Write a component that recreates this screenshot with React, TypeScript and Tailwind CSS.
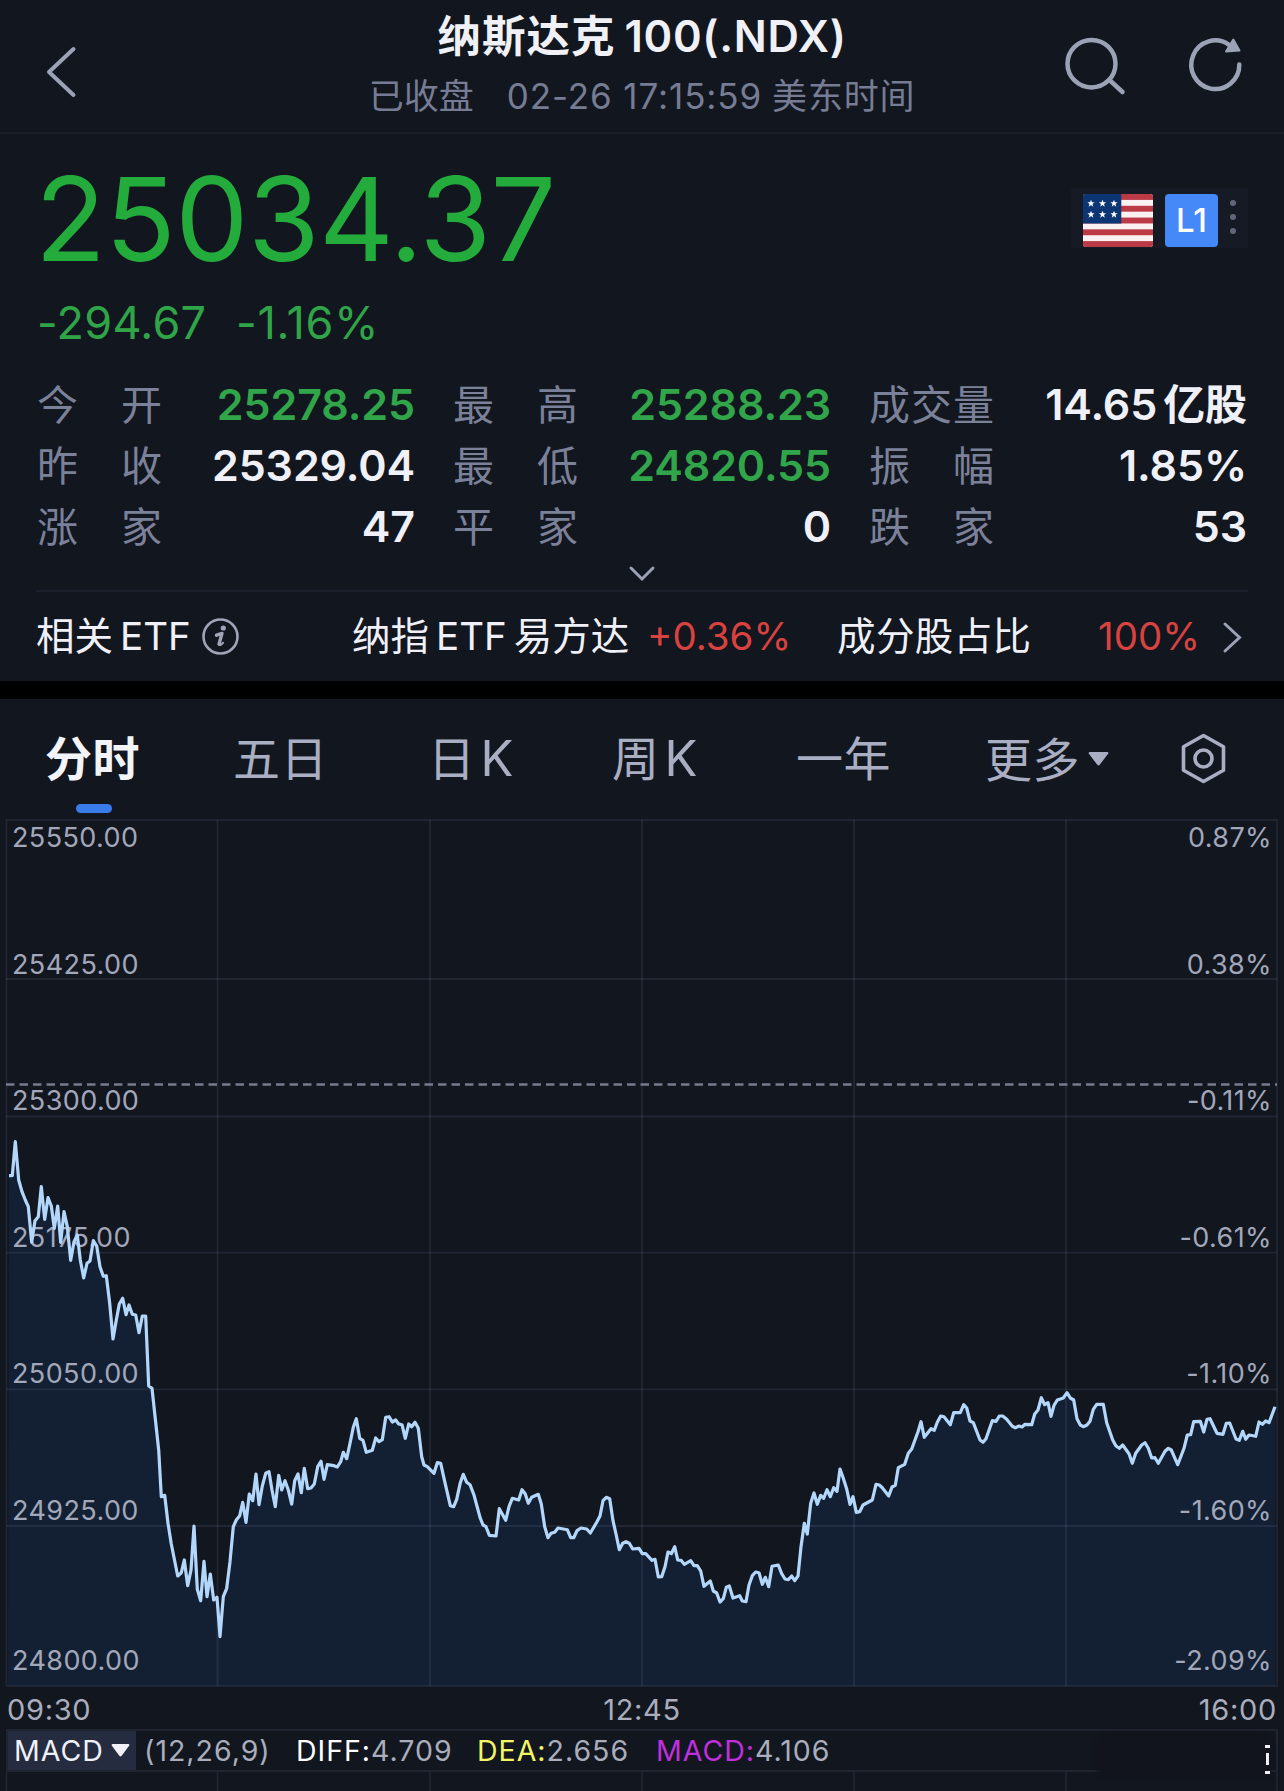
import clsx from "clsx";

const STATS = [
  { label: "今开", value: "25278.25", down: true },
  { label: "最高", value: "25288.23", down: true },
  { label: "成交量", value: "14.65", unit: "亿股" },
  { label: "昨收", value: "25329.04" },
  { label: "最低", value: "24820.55", down: true },
  { label: "振幅", value: "1.85%" },
  { label: "涨家", value: "47" },
  { label: "平家", value: "0" },
  { label: "跌家", value: "53" },
];

const TABS = [
  { name: "分时", active: true },
  { name: "五日" },
  { name: "日", suffix: "K" },
  { name: "周", suffix: "K" },
  { name: "一年" },
];

const AXIS = [
  { price: "25550.00", pct: "0.87%", top: "top-[4px]" },
  { price: "25425.00", pct: "0.38%", top: "top-[131px]" },
  { price: "25300.00", pct: "-0.11%", top: "top-[267px]" },
  { price: "25175.00", pct: "-0.61%", top: "top-[404px]" },
  { price: "25050.00", pct: "-1.10%", top: "top-[540px]" },
  { price: "24925.00", pct: "-1.60%", top: "top-[677px]" },
  { price: "24800.00", pct: "-2.09%", top: "top-[827px]" },
];

const GRID_X = [217.5, 430, 642, 854, 1066];
const GRID_Y = [979, 1116.5, 1252.7, 1389.3, 1526];

// minute by minute line, x then y
const LINE = `9,1175.7 12.3,1175.7 15.3,1141.7 18.7,1180 22,1191.7 25.3,1200 28.3,1206.7 31.7,1242.3 35,1220.7 38.3,1216.7
41.3,1186.7 44.7,1219.3 48,1197.7 51.3,1206 54.3,1228.3 57.7,1206 60.7,1242.3 64,1211.7 67.3,1226.7 70.7,1260.3
74,1241.7 77.3,1235 80.3,1260 83.7,1278 87,1263.3 90,1261 93.3,1240.7 96.7,1246 100,1266.7 103.3,1276.3
106.3,1275.7 109.7,1303.3 113,1339 116.3,1320 119.3,1304 122.7,1298.3 126,1314.7 129,1305 132.3,1314.3 135.7,1315
139,1332.7 142.3,1316 145.7,1316 148.7,1386 152,1388.3 158.7,1450 161.3,1496.7 164.7,1495.3 168,1523.3 171.3,1544
177.7,1576 181.3,1572.7 184.3,1560 187.7,1585.7 191,1570 194,1526 197.3,1589.3 200.7,1600.7 204,1561.3 207,1596.7
210.3,1574 213.7,1600 217,1597.3 220,1636.7 223.3,1596.7 226.7,1588.3 230,1561.7 233.3,1526.7 236.3,1520 239.7,1515.7
242.7,1502.3 246,1522.3 249.3,1494 252.7,1500.7 256,1474 259,1504.7 262.3,1486 265.7,1473.3 269,1471.7 272,1490
275.3,1506.7 278.7,1475.3 281.7,1490 285,1480.7 288.3,1490 291.7,1504 294.7,1480.7 298,1474 301.3,1492.7 304.3,1468.3
307.7,1488.7 311,1488 314.3,1484 317.7,1466.7 321,1461.3 324,1479.3 327.3,1464.7 334,1465.7 337.3,1467 340.7,1461.7
343.3,1452.3 346.7,1458.7 350,1443.3 353.3,1427.3 356.3,1418.7 359.7,1438.3 363,1440.3 366.3,1452.3 372.3,1450.3
375.7,1438 379,1441.7 382.3,1439.7 385.7,1417.3 389,1416.7 392.3,1422 395.7,1420 398.7,1424 402,1424.7 405.3,1438.3
408.7,1424 411.7,1426.7 415,1422.3 418.3,1428.3 421.7,1456.7 424,1465 427.3,1466.7 434,1473.3 437.3,1462.7 440.7,1463.3
444,1478.3 450.3,1505.7 453.7,1506.7 456.7,1499.3 460.3,1482.7 463.3,1474.3 466.7,1482.3 470,1484.7 474,1495 480,1517.3
483,1525 486,1526.7 489.3,1535.3 496,1536 499.3,1508.7 505.7,1520.3 509,1506.7 512.3,1498.3 518.7,1500 522,1489.7
525.3,1494 528.3,1503.3 531.7,1497.3 538.3,1494.3 541.3,1504 544.7,1526.7 548,1537.7 551,1533.3 554.7,1532.3 558,1528
567.3,1529.7 570.7,1537.7 573.7,1537.7 577,1530.7 581,1528 586.7,1529 590.3,1533 596.7,1522.3 600,1516 603,1500.7
606.3,1497.3 609.7,1498.7 613,1520.7 616,1534 619.3,1549.7 622.7,1543.3 626,1541.7 629.3,1543.3 632.7,1549 639,1548.3
642.3,1553.7 645.7,1553.7 652,1560.3 655,1559.3 658.3,1577 661.7,1576.7 665,1566.7 668,1552 671.3,1553.7 674.7,1546.7
677.7,1560 681,1560.3 684.3,1564.3 690.7,1560.7 694,1565.7 697.3,1565.7 700.7,1571 704,1586.3 710.3,1581 713.3,1591
716.7,1593 720,1602 723.3,1598.7 726.3,1587.3 729.3,1586 733,1598 739.7,1595.7 742.3,1601 746,1601.7 749,1585
752.3,1575.7 755.7,1572 759,1572.7 762.3,1584.3 765.3,1577.3 768.7,1586.7 772,1566.3 778.3,1565 781.7,1573.7 785,1579
788.3,1579.7 791.7,1576 794.7,1580.7 798,1576 801,1546.7 804.3,1523.3 807.3,1534 810.7,1503.3 814,1493 817.3,1504.3
820.7,1495.3 823.7,1498.3 827,1489.7 830.3,1496.7 833.7,1487.7 837,1491.3 840,1469 843.3,1478.3 846.7,1489 850,1504.3
853,1496.7 856.3,1512.3 859.7,1511.7 863,1505 872.3,1500 876,1484.3 879.3,1485 882.3,1487.7 888.7,1496 892,1487
895.3,1485.3 898.3,1467.7 904.7,1464.3 908.3,1453.3 911.7,1449 918,1431.7 921,1421.7 924.3,1437.3 931,1428.7 934.3,1430.3
937.3,1422.3 940.7,1416 944,1416.7 950.3,1424.7 953.7,1412.7 960.3,1412.7 963.7,1404.7 966.7,1408 970,1421 973.3,1422.7
980,1440 983,1442.3 986,1438.7 992.3,1420.7 996,1421.3 999.3,1416 1002.7,1416 1006.7,1419.3 1012.3,1426.3 1015.3,1427.7
1019,1426 1022,1427 1025,1424.3 1031.7,1424.7 1034.7,1414 1038,1410 1041.3,1397.7 1044.7,1404.7 1048,1402.7 1051,1416.3
1054,1405.3 1057.3,1400 1063.3,1398 1067,1392.7 1070.3,1398 1073.7,1400 1077,1418.7 1080.3,1425 1083.3,1426.7 1087,1425
1090,1421.3 1093.3,1409.3 1096.7,1404.3 1103.3,1404.3 1106.7,1422.7 1112.7,1440 1116,1446 1119.3,1448.3 1122.7,1445
1129,1453.7 1132.3,1463.3 1135.7,1453.3 1141.7,1445 1145,1442.7 1148.3,1448.3 1151.7,1458 1155,1457.7 1158.3,1463.3
1165,1451.3 1168.3,1448.3 1171.3,1450 1177.7,1464.7 1184,1448.3 1187.3,1435 1190.7,1434.7 1193.7,1421.7 1200.3,1421.3
1203.7,1432 1207,1419.3 1210,1418.7 1217,1433.3 1223,1434.3 1226.3,1423.3 1229.7,1423 1236,1439 1239.3,1440.3 1242.7,1431.3
1245.7,1439.3 1249,1435 1255.7,1436.3 1259,1422 1262.3,1424.3 1265.7,1421 1269,1422.7 1275,1406.7`;

function Header() {
  return (
    <header className="flex h-[134px] items-start justify-between border-b-2 border-[#1a1f2b] text-[#9ca2b6]">
      <svg className="ml-[43px] mt-[42px] h-[60px] w-[38px] shrink-0" viewBox="44 42 38 60" fill="none" stroke="currentColor">
        <path d="M74.5 49 50 72l24.5 23" strokeWidth="4" strokeLinecap="round" strokeLinejoin="round" />
      </svg>
      <div className="ml-[143px] flex w-[850px] flex-col items-center whitespace-nowrap">
        <h1 className="mt-[8px] flex h-[57px] items-center gap-[9px] text-[43.5px] leading-[57px] font-semibold text-[#f0f1f7]">
          <span className="tracking-[1px]">纳斯达克</span>
          <span className="tracking-[0.7px]">100(.NDX)</span>
        </h1>
        <p className="mt-[11px] flex text-[35px] leading-[40px] text-[#767c93]">
          <span>已收盘</span>
          <span className="ml-[33px] tracking-[0.9px]">02-26 17:15:59</span>
          <span className="ml-[10px] tracking-[0.8px]">美东时间</span>
        </p>
      </div>
      <svg className="mr-[34px] mt-[30px] h-[70px] w-[190px] shrink-0" viewBox="1060 30 190 70" fill="none" stroke="currentColor" strokeWidth="4.5" strokeLinecap="round">
        <ellipse cx="1091.5" cy="63.700" rx="24" ry="23.700" />
        <path d="M1110 80.500 1122.500 92" />
        <path d="M1239.300 64.500A24 24.300 0 1 1 1229 44.800" />
        <path d="M1233.300 39.500 1226 51.500 1239.500 50.500Z" fill="currentColor" strokeWidth="2" strokeLinejoin="round" />
      </svg>
    </header>
  );
}

function Flag() {
  const stars = [1091, 1102.5, 1114];
  return (
    <svg className="h-[53px] w-[70px]" viewBox="1083 194 70 53">
      <clipPath id="flag"><rect x="1083" y="194" width="70" height="53" rx="3" /></clipPath>
      <g clipPath="url(#flag)">
        <rect x="1083" y="194" width="70" height="53" fill="#fbf1f3" />
        {[0, 2, 4, 6, 8].map((i) => (
          <rect key={i} x="1083" y={194 + i * 5.89} width="70" height="5.9" fill="#bb3a45" />
        ))}
        <rect x="1083" y="194" width="38.3" height="29.5" fill="#0c3673" />
        {stars.flatMap((x) =>
          [203.5, 214.5].map((y) => (
            <path
              key={`${x}-${y}`}
              transform={`translate(${x} ${y})`}
              d="M0-3.800 1-1.200 3.600-1.200 1.500.500 2.300 3.200 0 1.600-2.300 3.200-1.500.500-3.600-1.200-1-1.200Z"
              fill="#fff"
            />
          ))
        )}
      </g>
    </svg>
  );
}

function Quote() {
  return (
    <section className="flex h-[239px] justify-between pl-[37px] pr-[36px]">
      <div className="text-[#23ab3b]">
        <div className="-ml-[2px] mt-[25px] h-[120px] text-[116px] leading-[120px] tracking-[-0.5px]">25034.37</div>
        <div className="mt-[20px] flex text-[45px] leading-[48px] text-[#30a548]">
          <span className="w-[199px] tracking-[0.3px]">-294.67</span>
          <span className="tracking-[0.8px]">-1.16%</span>
        </div>
      </div>
      <div className="mt-[54px] flex h-[60px] w-[177px] bg-[#161a25] pl-[12px] pt-[6px]">
        <Flag />
        <div className="ml-[12px] flex h-[53px] w-[53px] items-center justify-center rounded-[4px] bg-[#4489f7] text-[33px] font-medium text-white">
          L1
        </div>
        <div className="ml-[12px] mt-[6px] flex flex-col gap-[8px]">
          <i className="size-[6px] rounded-full bg-[#61667a]" />
          <i className="size-[6px] rounded-full bg-[#61667a]" />
          <i className="size-[6px] rounded-full bg-[#61667a]" />
        </div>
      </div>
    </section>
  );
}

function Stats() {
  return (
    <section className="grid grid-cols-3 gap-x-[38px] px-[37px]">
      {STATS.map((s) => (
        <div key={s.label} className="flex h-[61px] items-center justify-between whitespace-nowrap">
          <div className="mt-[3px] flex w-[125px] justify-between text-[41px] leading-[61px] text-[#7b8198]">
            {s.label.split("").map((c) => (
              <span key={c}>{c}</span>
            ))}
          </div>
          <div className={clsx("mt-px flex text-[43px] leading-[61px] font-semibold tracking-[-0.1px]", s.down ? "text-[#31a54a]" : "text-[#f0f1f8]")}>
            {s.value}
            {s.unit && <span className="ml-[6px] text-[42px]">{s.unit}</span>}
          </div>
        </div>
      ))}
    </section>
  );
}

function EtfRow() {
  return (
    <section className="grid h-[89px] grid-cols-[166px_150px_295px_190px_261px_124px_auto] items-center pl-[36px] text-[38.5px] leading-[89px] whitespace-nowrap text-[#f0f1f8]">
      <span>相关<span className="ml-[7px]">ETF</span></span>
      <svg className="h-[38px] w-[38px]" viewBox="0 0 38 38" fill="none" stroke="#9fa4b6">
        <circle cx="18.5" cy="18.500" r="17" strokeWidth="2.6" />
        <circle cx="21.300" cy="10" r="2.600" fill="#9fa4b6" stroke="none" />
        <path d="M14.500 17.200 20 15.400 17 26.200" strokeWidth="3.400" strokeLinecap="round" strokeLinejoin="round" />
        <path d="M17 26.300c.2 1.500 2.200.8 4.200-1.600" strokeWidth="2" strokeLinecap="round" />
      </svg>
      <span>纳指<span className="mx-[7px]">ETF</span>易方达</span>
      <span className="text-[#d8423f]">+0.36%</span>
      <span className="tracking-[0.4px]">成分股占比</span>
      <span className="text-[#d8423f]">100%</span>
      <svg className="h-[34px] w-[22px]" viewBox="0 0 22 34" fill="none" stroke="#9ca2b6" strokeWidth="3" strokeLinecap="round">
        <path d="M3 4 17.500 17.500 3 31" />
      </svg>
    </section>
  );
}

function Tabs() {
  return (
    <nav className="grid h-[120px] grid-cols-[188px_195px_184px_184px_189px_194px_auto] pl-[45px] text-[47px] leading-[119px] tracking-[0.6px] text-[#a9aec2]">
      {TABS.map((t) => (
        <div key={t.name} className={clsx("relative whitespace-nowrap", t.active && "font-semibold text-[#f3f4fa]")}>
          {t.name}
          {t.suffix && <span className="ml-[5px] text-[49px]">{t.suffix}</span>}
          {t.active && <span className="absolute left-[31px] top-[105px] h-[9px] w-[36px] rounded-full bg-[#3a7bea]" />}
        </div>
      ))}
      <div className="flex items-center gap-[8px] whitespace-nowrap">
        更多
        <svg className="h-[14px] w-[21px]" viewBox="0 0 21 14" fill="currentColor">
          <path d="M1.500 0h18q1.500.5.6 1.800l-8.400 11q-1.200 1.300-2.400 0L.9 1.800Q0 .5 1.500 0Z" />
        </svg>
      </div>
      <svg className="mt-[33px] h-[54px] w-[48px]" viewBox="0 0 48 54" fill="none" stroke="currentColor" strokeWidth="3.600">
        <path d="M24.500 3.500 44.500 14.800V38.200L24.500 49.500 4.500 38.200V14.800Z" strokeLinejoin="round" />
        <circle cx="24.500" cy="26.500" r="8.500" />
      </svg>
    </nav>
  );
}

function Chart() {
  return (
    <section className="relative h-[868px] text-[27px] leading-[30px] tracking-[0.4px] text-[#a2a7b9]">
      <svg className="block h-[868px] w-[1284px]" viewBox="0 819 1284 868" fill="none">
        <polygon points={`${LINE} 1275,1686 8,1686 9,1175.7`} fill="#173763" fillOpacity="0.3" />
        <g stroke="#8c96b8" strokeOpacity="0.13" strokeWidth="1.800">
          <rect x="6.500" y="820" width="1270.500" height="866" />
          {GRID_X.map((x) => <path key={x} d={`M${x} 820V1686`} />)}
          {GRID_Y.map((y) => <path key={y} d={`M6 ${y}H1277`} />)}
        </g>
        <path d="M6 1084.500H1277" stroke="#767c8d" strokeWidth="2.500" strokeDasharray="8.500 5" />
      </svg>
      {AXIS.map((a) => (
        <div key={a.price} className={clsx("absolute left-[12px] right-[12px] flex justify-between", a.top)}>
          <span>{a.price}</span>
          <span>{a.pct}</span>
        </div>
      ))}
      {/* the line runs over the price labels */}
      <svg className="absolute left-0 top-0 h-[868px] w-[1284px]" viewBox="0 819 1284 868" fill="none">
        <polyline points={LINE} stroke="#b3d6fb" strokeWidth="3.200" strokeLinejoin="round" />
      </svg>
    </section>
  );
}

function Macd() {
  return (
    <section>
      <div className="flex h-[42px] justify-between pl-[7px] pr-[7px] pt-[2px] text-[29px] leading-[42px] tracking-[0.7px] text-[#a9adbc]">
        <span className="w-[90px]">09:30</span>
        <span>12:45</span>
        <span className="w-[90px] text-right">16:00</span>
      </div>
      <div className="relative mx-[6px] flex h-[43px] border-2 border-[#1f2430] text-[28.5px] leading-[39px] tracking-[1px] whitespace-nowrap text-[#a9adbc]">
        <div className="flex w-[128px] shrink-0 items-center justify-between bg-[#252c3f] pl-[6px] pr-[6px] text-[#f0f1f8]">
          MACD
          <svg className="h-[13px] w-[19px]" viewBox="0 0 19 13" fill="currentColor">
            <path d="M1.500 0h16q1.500.5.6 1.800l-7.400 10q-1.200 1.300-2.400 0L.9 1.800Q0 .5 1.500 0Z" />
          </svg>
        </div>
        <span className="ml-[8px] w-[152px]">(12,26,9)</span>
        <span className="w-[181px]"><b className="font-normal text-white">DIFF:</b>4.709</span>
        <span className="w-[179px]"><b className="font-normal text-[#f2f666]">DEA:</b>2.656</span>
        <span><b className="font-normal text-[#c02fdc]">MACD:</b>4.106</span>
        <div className="absolute -bottom-[8px] right-[4px] h-[46px] w-[176px] rounded-[12px] bg-[#11141d] blur-[2px]" />
        <svg className="absolute right-[5px] top-[13px] h-[32px] w-[8px]" viewBox="0 0 8 32" fill="#eef0f5">
          <path d="M2 1h5v3H2zM3 9h3v12H3zM2 27h5v3H2z" />
        </svg>
      </div>
      <svg className="block h-[20px] w-[1284px]" viewBox="0 0 1284 20" stroke="#1f2430" strokeWidth="1.8">
        <path d="M6.5 0V20M1277 0V20" />
        {GRID_X.map((x) => <path key={x} d={`M${x} 0V20`} />)}
      </svg>
    </section>
  );
}

export default function App() {
  return (
    <main className="h-[1791px] w-[1284px] overflow-hidden bg-[#12161f] font-['Inter','Noto_Sans_CJK_SC',sans-serif]">
      <Header />
      <Quote />
      <Stats />
      <div className="mx-[36px] flex h-[36px] justify-center border-b-2 border-[#1b1f2b]">
        <svg className="mt-[8px] h-[20px] w-[30px]" viewBox="0 0 30 20" fill="none" stroke="#9ca2b6" strokeWidth="3" strokeLinecap="round">
          <path d="M4 4 15 15 26 4" />
        </svg>
      </div>
      <EtfRow />
      <div className="h-[18px] bg-black" />
      <Tabs />
      <Chart />
      <Macd />
    </main>
  );
}
